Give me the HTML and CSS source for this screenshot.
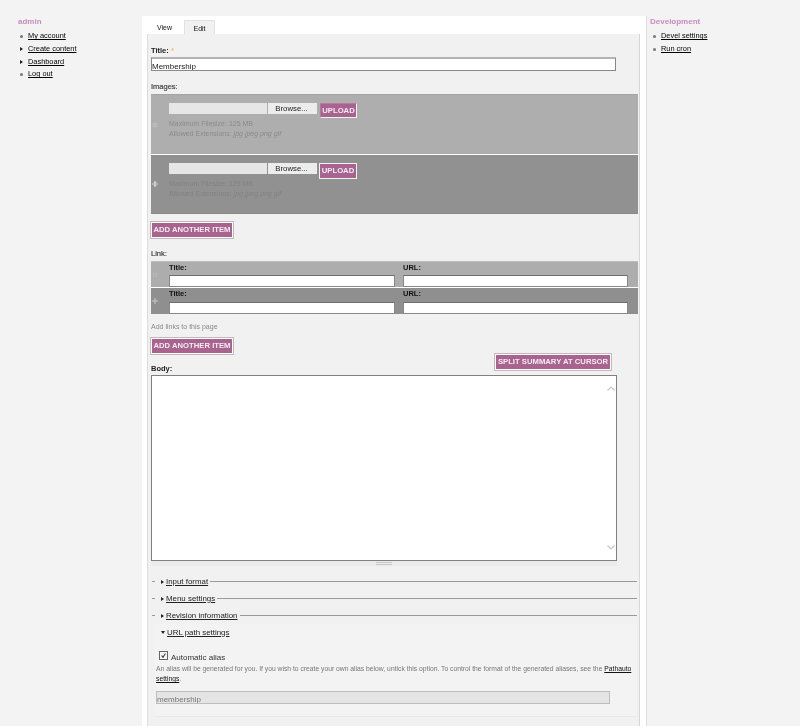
FILE: index.html
```html
<!DOCTYPE html>
<html lang="en">
<head>
<meta charset="utf-8">
<title>Edit Membership</title>
<link rel="stylesheet" href="styles.css">
</head>
<body>
<div class="page">
  <aside class="side side-left">
    <h2 class="side-title">admin</h2>
    <ul class="menu">
      <li><i class="dot"></i><a href="#">My account</a></li>
      <li><i class="tri"></i><a href="#">Create content</a></li>
      <li><i class="tri"></i><a href="#">Dashboard</a></li>
      <li><i class="dot"></i><a href="#">Log out</a></li>
    </ul>
  </aside>
  <main class="main">
    <nav class="tabs">
      <a class="tab" href="#">View</a>
      <a class="tab tab-active" href="#">Edit</a>
    </nav>
    <form class="panel">
      <label class="label">Title: <span class="req">*</span></label>
      <input class="text title-input" type="text" value="Membership">

      <div class="label label-soft section">Images:</div>
      <div class="upload upload-a">
        <svg class="handle" viewBox="0 0 7 7"><path d="M3.5 0v7M0 3.5h7M0 2h7M0 5h7" stroke="#c4c4c4" stroke-width=".7" fill="none"/></svg>
        <div class="upload-body">
          <div class="file-row">
            <span class="file-name"></span><span class="browse">Browse...</span><button class="btn btn-upload" type="button">UPLOAD</button>
          </div>
          <div class="hint">Maximum Filesize: 125 MB<br>Allowed Extensions: <em>jpg jpeg png gif</em></div>
        </div>
      </div>
      <div class="upload upload-b">
        <svg class="handle" viewBox="0 0 7 7"><path d="M3.5 0v7M0 3.5h7M2 1.5h3M2 5.5h3" stroke="#e2e2e2" stroke-width="1" fill="none"/></svg>
        <div class="upload-body">
          <div class="file-row">
            <span class="file-name"></span><span class="browse">Browse...</span><button class="btn btn-upload btn-lit" type="button">UPLOAD</button>
          </div>
          <div class="hint hint-dim">Maximum Filesize: 125 MB<br>Allowed Extensions: <em>jpg jpeg png gif</em></div>
        </div>
      </div>
      <button class="btn btn-add add-first" type="button">ADD ANOTHER ITEM</button>

      <div class="label label-soft section">Link:</div>
      <div class="link-row link-a">
        <svg class="handle" viewBox="0 0 7 7"><path d="M2 1v5M5 1v5" stroke="#c4c4c4" stroke-width=".7" fill="none"/></svg>
        <div class="link-col"><span class="link-label">Title:</span><input class="text link-input" type="text"></div>
        <div class="link-col"><span class="link-label">URL:</span><input class="text link-input" type="text"></div>
      </div>
      <div class="link-row link-b">
        <svg class="handle" viewBox="0 0 7 7"><path d="M3.5 0v7M0 3.5h7" stroke="#d0d0d0" stroke-width="1" fill="none"/></svg>
        <div class="link-col"><span class="link-label">Title:</span><input class="text link-input" type="text"></div>
        <div class="link-col"><span class="link-label">URL:</span><input class="text link-input" type="text"></div>
      </div>
      <p class="help">Add links to this page</p>
      <button class="btn btn-add add-second" type="button">ADD ANOTHER ITEM</button>

      <div class="body-head">
        <span class="label">Body:</span>
        <button class="btn btn-split" type="button">SPLIT SUMMARY AT CURSOR</button>
      </div>
      <div class="editor">
        <textarea class="area"></textarea>
        <svg class="chev chev-up" viewBox="0 0 8 5"><path d="M.5 4.5 4 1l3.500 3.500" stroke="#c8c8c8" stroke-width="1.200" fill="none"/></svg>
        <svg class="chev chev-down" viewBox="0 0 8 5"><path d="M.5.5 4 4 7.500.5" stroke="#c8c8c8" stroke-width="1.200" fill="none"/></svg>
      </div>
      <div class="grippie"><span class="grip"></span></div>

      <div class="fold fold-first"><span class="fold-dash"></span><i class="tri"></i><a href="#">Input format</a><span class="fold-line"></span></div>
      <div class="fold"><span class="fold-dash"></span><i class="tri"></i><a href="#">Menu settings</a><span class="fold-line"></span></div>
      <div class="fold"><span class="fold-dash"></span><i class="tri"></i><a href="#">Revision information</a><span class="fold-line"></span></div>

      <section class="url-set">
        <div class="url-legend"><i class="tri-down"></i><a href="#">URL path settings</a></div>
        <div class="check-row">
          <span class="check"><svg viewBox="0 0 9 9"><path d="M2 4.500 3.800 6.800 7 2" stroke="#333" stroke-width="1.300" fill="none"/></svg></span>
          <span class="check-text">Automatic alias</span>
        </div>
        <p class="desc">An alias will be generated for you. If you wish to create your own alias below, untick this option. To control the format of the generated aliases, see the <a href="#">Pathauto settings</a>.</p>
        <input class="text alias" type="text" value="membership" disabled>
      </section>
    </form>
  </main>
  <aside class="side side-right">
    <h2 class="side-title">Development</h2>
    <ul class="menu">
      <li><i class="dot"></i><a href="#">Devel settings</a></li>
      <li><i class="dot"></i><a href="#">Run cron</a></li>
    </ul>
  </aside>
</div>
</body>
</html>
```

FILE: styles.css
```css
* { box-sizing: border-box; }
html, body { margin: 0; height: 726px; overflow: hidden; }
body {
  background: #f3f3f3;
  color: #111;
  font-family: "Liberation Sans", Arial, sans-serif;
  font-size: 8px;
  line-height: 10px;
}
a { color: #000; text-decoration: underline; }
.page { display: grid; grid-template-columns: 142px 505px 1fr; height: 726px; filter: blur(.3px); }

/* sidebars */
.side { padding-top: 16px; }
.side-left { padding-left: 18px; }
.side-right { padding-left: 3px; }
.side-title { margin: 0 0 4px; height: 10px; font-size: 8px; line-height: 12px; font-weight: bold; color: #c78dbf; }
.menu { list-style: none; margin: 0; padding: 0 0 0 2px; }
.menu li { display: flex; align-items: center; height: 12.700px; }
.side-left .menu li i { margin-right: 5px; }
.side-right .menu { padding-left: 3px; }
.side-right .menu li i { margin-right: 5px; }
.side-left .menu a, .side-right .menu a { font-size: 7.400px; }
.dot { flex: none; width: 3px; height: 3px; border-radius: 50%; background: #777; }
.tri { flex: none; width: 0; height: 0; border-left: 3px solid #222; border-top: 2.500px solid transparent; border-bottom: 2.500px solid transparent; }
.tri-down { flex: none; width: 0; height: 0; border-top: 3px solid #222; border-left: 2.500px solid transparent; border-right: 2.500px solid transparent; }

/* centre column */
.main {
  margin-top: 16px;
  padding: 0 6px 0 5px;
  background: #fff;
  border-right: 1px solid #ddd;
  height: 710px;
}
.tabs { display: flex; height: 18px; padding-left: 10px; align-items: flex-end; }
.tab { display: block; height: 14px; line-height: 15px; font-size: 7px; color: #111; text-decoration: none; }
.tabs .tab:first-child { width: 27px; }
.tab-active {
  width: 31px; text-align: center;
  background: #f1f1f1;
  border: 1px solid #e2e2e2;
  border-bottom: 0;
}
.panel {
  height: 692px;
  padding: 11px 1px 0 3px;
  background: #f1f1f1;
  border-left: 1px solid #dcdcdc;
  border-right: 1px solid #d6d6d6;
}
.label { display: block; height: 10px; font-size: 7.500px; line-height: 12px; font-weight: bold; color: #222; }
.label-soft { font-weight: normal; -webkit-text-stroke: .2px #444; color: #444; }
.req { color: #f0c060; }
.section { margin-top: 10px; margin-bottom: 3px; }

.text {
  display: block;
  background: #fff;
  border: 1px solid #888;
  border-top: 2px solid #b4b4b4;
  border-radius: 0;
  font: 8px/10px "Liberation Sans", Arial, sans-serif;
  color: #222;
  padding: 3px 0 0;
  outline: 0;
}
.title-input { margin-top: 2px; width: 465px; height: 14px; }

/* uploads */
.upload { display: flex; width: 487px; }
.upload-a { height: 61px; background: #aeaeae; border-top: 1px solid #a4a4a4; border-bottom: 1px solid #fff; }
.upload-b { height: 59px; background: #919191; border-bottom: 1px solid #8a8a8a; }
.handle { flex: none; width: 6px; height: 6px; margin: 26px 11px 0 1px; }
.upload-a .handle { margin-top: 27px; }
.upload-body { padding-top: 8px; }
.file-row { display: flex; align-items: flex-start; height: 16px; }
.file-name { display: block; width: 98px; height: 11px; background: #e6e6e6; }
.browse {
  display: block; width: 49px; height: 11px; margin-left: 1px; padding-right: 2px;
  background: #ececec; color: #222;
  font-size: 7.800px; line-height: 12px; text-align: center;
}
.btn {
  display: block;
  margin: 0;
  padding: 0;
  background: #a9638f;
  color: #f6eaf3;
  border: 1px solid #fff;
  outline: 1px solid #c4b8c0;
  outline-offset: 0;
  font: bold 7.700px/12px "Liberation Sans", Arial, sans-serif;
  text-align: center;
}
.btn-upload { width: 37px; height: 15px; margin-left: 3px; margin-top: 0; outline: 0; border-color: #b878a4 #f4f4f4 #f4f4f4 #b878a4; }
.btn-lit { width: 38px; height: 16px; margin-left: 2px; border-color: #f2f2f2; }
.hint { font-size: 7px; line-height: 9.500px; color: #8b8b8b; }
.hint em { font-style: italic; }
.hint-dim { color: #828282; }
.btn-add { height: 16px; width: 82px; }
.add-first { margin-top: 8px; }
.add-second { margin-top: 6px; }

/* links */
.link-row { display: flex; width: 487px; }
.link-a { background: #adadad; border-top: 1px solid #bdbdbd; height: 27px; border-bottom: 1px solid #fff; }
.link-b { background: #8f8f8f; height: 26px; }
.link-row .handle { margin: 10px 11px 0 1px; }
.link-col { width: 234px; padding-right: 8px; }
.link-label { display: block; font-size: 7.500px; line-height: 12px; font-weight: bold; color: #111; }
.link-a .link-label { height: 13px; }
.link-b .link-label { height: 14px; }
.link-input { width: 226px; height: 12px; border-top: 1px solid #6e6e6e; }
.link-col:last-child .link-input { width: 225px; }
.help { margin: 8px 0 0; height: 10px; font-size: 7px; line-height: 10px; color: #888; }

/* body */
.body-head { display: flex; justify-content: space-between; align-items: flex-start; width: 460px; height: 21px; }
.body-head .label { margin-top: 9px; }
.btn-split { width: 116px; height: 16px; }
.editor { position: relative; width: 466px; height: 186px; }
.area { display: block; width: 100%; height: 100%; background: #fff; border: 1px solid #808080; border-radius: 0; outline: 0; resize: none; overflow: hidden; margin: 0; padding: 2px; }
.chev { position: absolute; right: 2px; width: 8px; height: 5px; }
.chev-up { top: 11px; }
.chev-down { bottom: 11px; }
.grippie { display: flex; justify-content: center; width: 466px; height: 5px; background: #ebebeb; padding-top: 1px; }
.grip { display: block; width: 16px; height: 3px; border-top: 1px solid #c8c8c8; border-bottom: 1px solid #c8c8c8; }

/* fieldsets */
.fold { display: flex; align-items: center; height: 17px; width: 486px; }
.fold-first { margin-top: 7px; }
.fold .tri { margin: 0 2px 0 6px; }
.fold a { font-size: 7.900px; color: #222; }
.fold-dash { width: 3px; height: 1px; margin-left: 1px; background: #999; }
.fold-line { flex: 1; height: 1px; margin-left: 2px; background: #9a9a9a; }
.url-set {
  width: 483px;
  height: 93px;
  margin-left: 4px;
  padding: 0 2px 0 1px;
  background: #f3f3f3;
  border-bottom: 1px solid #e9e9e9;
  border-right: 1px solid #ececec;
}
.url-legend { display: flex; align-items: center; height: 17px; padding-left: 5px; }
.url-legend a { margin-left: 2px; font-size: 7.900px; color: #222; }
.check-row { display: flex; align-items: flex-start; height: 12px; margin-top: 10px; padding-left: 3px; }
.check { display: block; width: 9px; height: 9px; background: #f7f7f7; border: 1px solid #666; margin-right: 3px; }
.check svg { display: block; width: 7px; height: 7px; }
.check-text { font-size: 8px; line-height: 13px; color: #333; }
.desc { margin: 1px 0 0; font-size: 6.750px; line-height: 10px; color: #777; }
.desc a { color: #111; }
.alias {
  width: 454px; height: 13px; margin-top: 7px; padding-top: 4px;
  background: #e4e4e4;
  border: 1px solid #bdbdbd;
  color: #777;
  font-size: 8px;
}
```
